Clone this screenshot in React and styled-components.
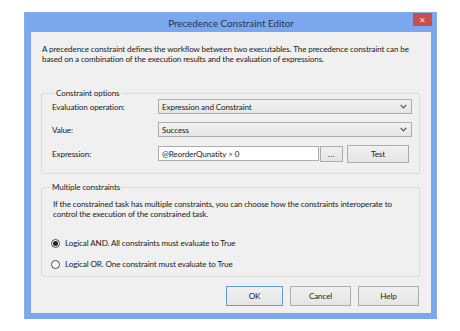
import React from "react";
import styled, { createGlobalStyle } from "styled-components";

const Global = createGlobalStyle`
  html, body { margin: 0; padding: 0; background: #ffffff; }
  body { font-family: Lato, "Noto Sans", sans-serif; }
  * { box-sizing: border-box; }
`;

const Window = styled.div`
  margin: 13px 0 0 25px;
  width: 411px;
  height: 306px;
  background: #7ba7ee;
  padding: 0 5px 6px 6px;
  display: flex;
  flex-direction: column;
  box-shadow: 0 0 0 1px #86aee8;
`;

const TitleBar = styled.div`
  height: 19px;
  position: relative;
  display: flex;
  align-items: center;
  justify-content: center;
  font-size: 9.8px;
  color: #2a3545;
  padding-top: 1px;
`;

const Close = styled.div`
  position: absolute;
  right: -1px;
  top: 0;
  width: 19px;
  height: 13px;
  background: #c7504f;
  color: #f4dcdc;
  font-size: 8px;
  display: flex;
  align-items: center;
  justify-content: center;
  line-height: 1;
`;

const Client = styled.div`
  flex: 1;
  background: #f0f0f0;
  padding: 13px 11px 0 10px;
  display: flex;
  flex-direction: column;
  font-size: 8.1px;
  letter-spacing: -0.12px;
  color: #222;
`;

const Desc = styled.p`
  margin: 0 0 0 1px;
  line-height: 9.7px;
`;

const Group = styled.fieldset`
  margin: 0;
  padding: ${p => p.$pad};
  border: 1px solid #dcdcdc;
  border-radius: 2px;
  min-width: 0;
  height: ${p => p.$h}px;
  margin-top: ${p => p.$mt}px;
`;

const Legend = styled.legend`
  padding: 0 1px;
  margin-left: 3px;
  color: #222;
  line-height: 10px;
`;

const FormRow = styled.div`
  display: flex;
  align-items: center;
  height: 15px;
  margin-top: ${p => p.$mt}px;
`;

const FieldLabel = styled.div`
  width: 106px;
  flex: none;
`;

const Select = styled.div`
  flex: 1;
  height: 15px;
  border: 1px solid #acacac;
  background: linear-gradient(#f2f2f2, #e6e6e6);
  display: flex;
  align-items: center;
  padding: 0 4px 0 3px;
  justify-content: space-between;
`;

const Input = styled.div`
  width: 161px;
  height: 15px;
  border: 1px solid #abadb3;
  background: #ffffff;
  display: flex;
  align-items: center;
  padding: 0 3px;
  flex: none;
`;

const SmallButton = styled.div`
  width: 23px;
  height: 16px;
  border: 1px solid #acacac;
  background: linear-gradient(#f0f0f0, #e5e5e5);
  display: flex;
  align-items: center;
  justify-content: center;
  margin-left: 1px;
  flex: none;
  font-size: 8px;
  letter-spacing: 0.5px;
`;

const Button = styled.div`
  width: ${p => p.$w || 61}px;
  height: ${p => p.$h || 20}px;
  border: 1px solid ${p => (p.$focus ? "#5f9ee6" : "#acacac")};
  background: linear-gradient(#f0f0f0, #e5e5e5);
  display: flex;
  align-items: center;
  justify-content: center;
  flex: none;
  margin-left: ${p => p.$ml || 0}px;
`;

const GroupText = styled.p`
  margin: 8px 8px 0 5px;
  line-height: 9.5px;
`;

const RadioRow = styled.label`
  display: flex;
  align-items: center;
  gap: 5px;
  margin: ${p => p.$mt}px 0 0 3px;
  height: 10px;
`;

const RadioCircle = styled.span`
  width: 9px;
  height: 9px;
  border-radius: 50%;
  border: 1px solid #4a4a4a;
  background: #fff;
  display: flex;
  align-items: center;
  justify-content: center;
  flex: none;
  &::after {
    content: "";
    width: 5px;
    height: 5px;
    border-radius: 50%;
    background: ${p => (p.$on ? "#1e1e1e" : "transparent")};
  }
`;

const Footer = styled.div`
  display: flex;
  justify-content: flex-end;
  margin-top: 9px;
  padding-right: 1px;
`;

const Chevron = () => (
  <svg width="7" height="5" viewBox="0 0 7 5">
    <path d="M0.7 0.8 L3.5 3.8 L6.3 0.8" fill="none" stroke="#555" strokeWidth="1.2" />
  </svg>
);

export default function App() {
  return (
    <>
      <Global />
      <Window>
        <TitleBar>
          Precedence Constraint Editor
          <Close>✕</Close>
        </TitleBar>
        <Client>
          <Desc>
            A precedence constraint defines the workflow between two executables. The precedence constraint can be
            based on a combination of the execution results and the evaluation of expressions.
          </Desc>
          <Group $pad="0 7px 0 10px" $h={86} $mt={24}>
            <Legend>Constraint options</Legend>
            <FormRow $mt={1}>
              <FieldLabel>Evaluation operation:</FieldLabel>
              <Select>
                Expression and Constraint
                <Chevron />
              </Select>
            </FormRow>
            <FormRow $mt={8}>
              <FieldLabel>Value:</FieldLabel>
              <Select>
                Success
                <Chevron />
              </Select>
            </FormRow>
            <FormRow $mt={9}>
              <FieldLabel>Expression:</FieldLabel>
              <Input>@ReorderQunatity &gt; 0</Input>
              <SmallButton>...</SmallButton>
              <Button $w={62} $h={18} $ml={4}>Test</Button>
            </FormRow>
          </Group>
          <Group $pad="0 7px 0 6px" $h={95} $mt={8}>
            <Legend>Multiple constraints</Legend>
            <GroupText>
              If the constrained task has multiple constraints, you can choose how the constraints interoperate to
              control the execution of the constrained task.
            </GroupText>
            <RadioRow $mt={19}>
              <RadioCircle $on />
              Logical AND. All constraints must evaluate to True
            </RadioRow>
            <RadioRow $mt={11}>
              <RadioCircle />
              Logical OR. One constraint must evaluate to True
            </RadioRow>
          </Group>
          <Footer>
            <Button $w={57} $focus>OK</Button>
            <Button $w={61} $ml={7}>Cancel</Button>
            <Button $w={61} $ml={7}>Help</Button>
          </Footer>
        </Client>
      </Window>
    </>
  );
}
